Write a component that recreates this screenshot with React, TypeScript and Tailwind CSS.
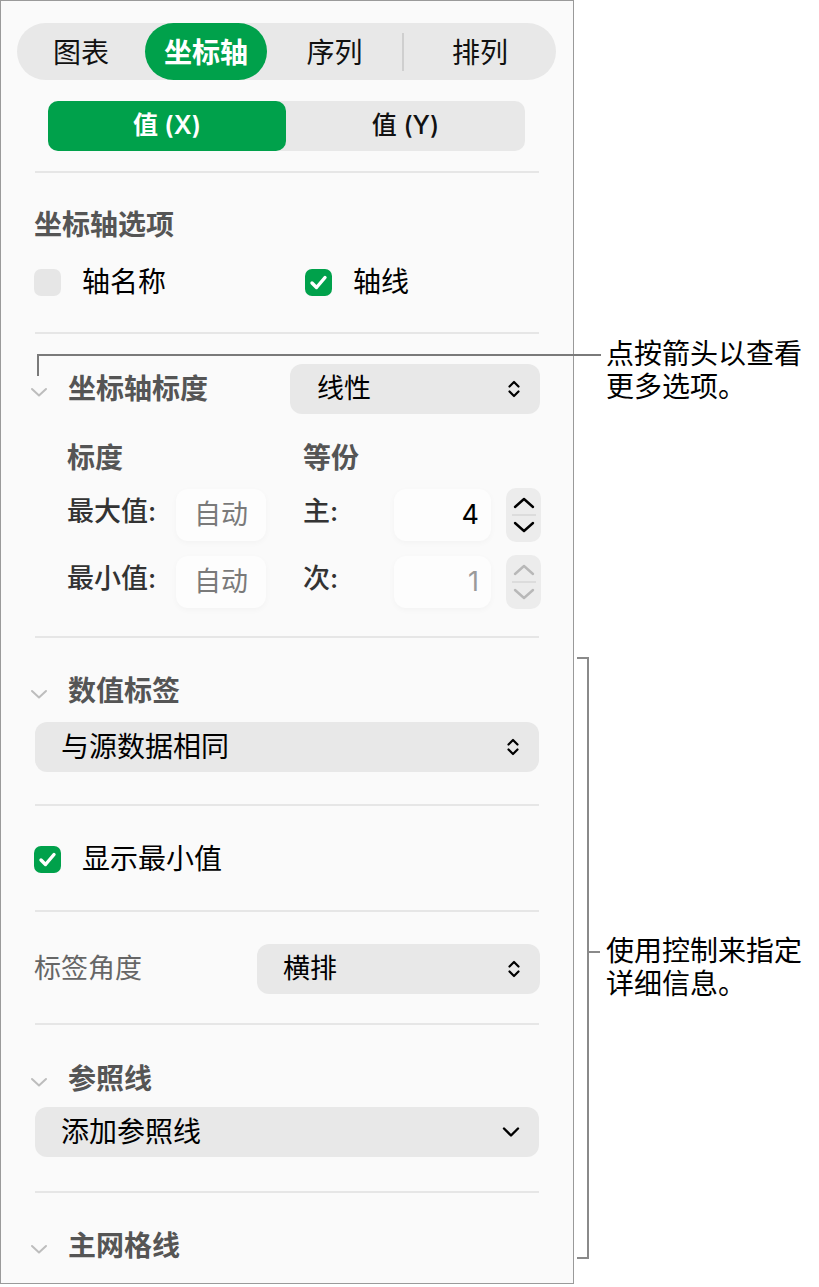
import React from 'react'

const font = "font-['Inter','Noto_Sans_CJK_SC',sans-serif]"

function UpDown({ className = '' }: { className?: string }) {
  return (
    <svg width="16" height="24" viewBox="0 0 16 24" className={className} fill="none">
      <path d="M3.5 9.5 L8 5 L12.5 9.5" stroke="currentColor" strokeWidth="2.2" strokeLinecap="round" strokeLinejoin="round" />
      <path d="M3.5 14.5 L8 19 L12.5 14.5" stroke="currentColor" strokeWidth="2.2" strokeLinecap="round" strokeLinejoin="round" />
    </svg>
  )
}

function Disclosure() {
  return (
    <svg width="18" height="12" viewBox="0 0 18 12" fill="none" className="text-[#bdbdbd]">
      <path d="M2 3 L9 9.5 L16 3" stroke="currentColor" strokeWidth="2" strokeLinecap="round" strokeLinejoin="round" />
    </svg>
  )
}

function Check({ on, label }: { on: boolean; label: string }) {
  return (
    <div className="flex items-center gap-[21px] h-[32px]">
      {on ? (
        <div className="w-[27px] h-[27px] rounded-[7px] bg-[#00a14b] flex items-center justify-center">
          <svg width="27" height="27" viewBox="0 0 27 27" fill="none">
            <path d="M7 14 L11.5 18.5 L20 8.5" stroke="white" strokeWidth="3.4" strokeLinecap="round" strokeLinejoin="round" />
          </svg>
        </div>
      ) : (
        <div className="w-[27px] h-[27px] rounded-[7px] bg-[#e6e6e6]" />
      )}
      <span className="text-[28px] leading-[32px] text-black">{label}</span>
    </div>
  )
}

function Divider({ mt }: { mt: string }) {
  return <div className={`${mt} mx-[34px] h-[2px] bg-[#e6e6e6]`} />
}

function SectionHead({ label, mt }: { label: string; mt: string }) {
  return (
    <div className={`${mt} flex items-center h-[32px] pl-[29px]`}>
      <div className="w-[38px] pt-[6px]">
        <Disclosure />
      </div>
      <span className="text-[28px] leading-[32px] font-semibold text-[#555]">{label}</span>
    </div>
  )
}

function Stepper({ disabled }: { disabled?: boolean }) {
  const c = disabled ? 'text-[#b8b8b8]' : 'text-black'
  return (
    <div className={`w-[35px] h-[54px] rounded-[10px] bg-[#ececec] flex flex-col items-center justify-center ${c}`}>
      <svg width="24" height="14" viewBox="0 0 24 14" fill="none">
        <path d="M3 11 L12 3 L21 11" stroke="currentColor" strokeWidth="2.4" strokeLinecap="round" strokeLinejoin="round" />
      </svg>
      <div className="w-[24px] h-[2px] bg-[#dcdcdc] my-[4px]" />
      <svg width="24" height="14" viewBox="0 0 24 14" fill="none">
        <path d="M3 3 L12 11 L21 3" stroke="currentColor" strokeWidth="2.4" strokeLinecap="round" strokeLinejoin="round" />
      </svg>
    </div>
  )
}

function Field({ children, right, color }: { children: React.ReactNode; right?: boolean; color: string }) {
  return (
    <div
      className={`h-[52px] rounded-[12px] bg-[#fdfdfd] shadow-[0_2px_6px_rgba(0,0,0,0.03)] flex items-center text-[27px] ${color} ${
        right ? 'w-[97px] justify-end pr-[12px]' : 'w-[90px] justify-center'
      }`}
    >
      {children}
    </div>
  )
}

export default function App() {
  return (
    <div className={`relative w-[819px] h-[1287px] bg-white ${font}`}>
      <div className="w-[574px] h-[1284px] border-[1.5px] border-[#9a9a9a] bg-[#fafafa] overflow-hidden">
        {/* top tabs */}
        <div className="mt-[22px] ml-[16px] w-[539px] h-[57px] rounded-full bg-[#e8e8e8] flex items-center text-[28px] text-[#111]">
          <div className="w-[128px] text-center pt-[2px]">图表</div>
          <div className="w-[122px] h-[57px] rounded-full bg-[#00a14b] text-white font-semibold flex items-center justify-center pt-[2px]">坐标轴</div>
          <div className="w-[135px] text-center pt-[2px]">序列</div>
          <div className="w-[2px] h-[38px] bg-[#cfcfcf]" />
          <div className="flex-1 text-center pt-[2px]">排列</div>
        </div>

        {/* x / y */}
        <div className="mt-[21px] ml-[47px] w-[477px] h-[50px] rounded-[10px] bg-[#e8e8e8] flex text-[25px]">
          <div className="w-[238px] rounded-[10px] bg-[#00a14b] text-white font-semibold flex items-center justify-center">值 (X)</div>
          <div className="flex-1 flex items-center justify-center text-[#111] font-medium">值 (Y)</div>
        </div>

        <Divider mt="mt-[20px]" />

        <div className="mt-[36px] pl-[33px] text-[28px] leading-[32px] font-semibold text-[#555]">坐标轴选项</div>
        <div className="mt-[25px] pl-[33px] flex">
          <div className="w-[271px]">
            <Check on={false} label="轴名称" />
          </div>
          <Check on label="轴线" />
        </div>

        <Divider mt="mt-[34px]" />

        {/* axis scale */}
        <div className="mt-[30px] flex items-center pl-[29px] pr-[33px]">
          <div className="w-[38px] pt-[6px]">
            <Disclosure />
          </div>
          <span className="flex-1 text-[28px] leading-[32px] font-semibold text-[#555]">坐标轴标度</span>
          <div className="w-[250px] h-[50px] rounded-[12px] bg-[#e8e8e8] flex items-center justify-between pl-[27px] pr-[18px]">
            <span className="text-[27px] text-black">线性</span>
            <UpDown />
          </div>
        </div>

        <div className="mt-[28px] pl-[66px] flex text-[28px] leading-[32px] font-semibold text-[#555]">
          <div className="w-[236px]">标度</div>
          <div>等份</div>
        </div>

        <div className="mt-[14px] pl-[66px] flex items-center h-[54px]">
          <span className="w-[109px] text-[27px] font-medium text-[#333] -mt-[6px]">最大值:</span>
          <Field color="text-[#7a7a7a]">自动</Field>
          <span className="ml-[37px] w-[91px] text-[27px] font-medium text-[#333] -mt-[6px]">主:</span>
          <Field right color="text-black">4</Field>
          <div className="ml-[15px]">
            <Stepper />
          </div>
        </div>

        <div className="mt-[13px] pl-[66px] flex items-center h-[54px]">
          <span className="w-[109px] text-[27px] font-medium text-[#333] -mt-[6px]">最小值:</span>
          <Field color="text-[#7a7a7a]">自动</Field>
          <span className="ml-[37px] w-[91px] text-[27px] font-medium text-[#333] -mt-[6px]">次:</span>
          <Field right color="text-[#9a9a9a]">1</Field>
          <div className="ml-[15px]">
            <Stepper disabled />
          </div>
        </div>

        <Divider mt="mt-[27px]" />

        <SectionHead label="数值标签" mt="mt-[37px]" />
        <div className="mt-[15px] mx-[34px] h-[50px] rounded-[12px] bg-[#e8e8e8] flex items-center justify-between pl-[26px] pr-[18px]">
          <span className="text-[28px] text-black">与源数据相同</span>
          <UpDown />
        </div>

        <Divider mt="mt-[32px]" />

        <div className="mt-[37px] pl-[33px]">
          <Check on label="显示最小值" />
        </div>

        <Divider mt="mt-[35px]" />

        <div className="mt-[32px] flex items-center pl-[33px] pr-[33px]">
          <span className="flex-1 text-[27px] text-[#666]">标签角度</span>
          <div className="w-[283px] h-[50px] rounded-[12px] bg-[#e8e8e8] flex items-center justify-between pl-[26px] pr-[18px]">
            <span className="text-[27px] text-black">横排</span>
            <UpDown />
          </div>
        </div>

        <Divider mt="mt-[29px]" />

        <SectionHead label="参照线" mt="mt-[38px]" />
        <div className="mt-[12px] mx-[34px] h-[50px] rounded-[12px] bg-[#e8e8e8] flex items-center justify-between pl-[26px] pr-[18px]">
          <span className="text-[28px] text-black">添加参照线</span>
          <svg width="20" height="12" viewBox="0 0 20 12" fill="none">
            <path d="M3 2.5 L10 9.5 L17 2.5" stroke="black" strokeWidth="2.4" strokeLinecap="round" strokeLinejoin="round" />
          </svg>
        </div>

        <Divider mt="mt-[34px]" />

        <SectionHead label="主网格线" mt="mt-[37px]" />
      </div>

      {/* callout: arrow */}
      <div className="absolute left-[37px] top-[354px] w-[564px] h-[2px] bg-[#7a7a7a]" />
      <div className="absolute left-[37px] top-[354px] w-[2px] h-[22px] bg-[#7a7a7a]" />
      <div className="absolute left-[606px] top-[338px] text-[28px] leading-[33px] text-black">
        <div>点按箭头以查看</div>
        <div>更多选项。</div>
      </div>

      {/* callout: bracket */}
      <div className="absolute left-[577px] top-[657px] w-[12px] h-[2px] bg-[#8a8a8a]" />
      <div className="absolute left-[587px] top-[657px] w-[2px] h-[602px] bg-[#8a8a8a]" />
      <div className="absolute left-[577px] top-[1257px] w-[12px] h-[2px] bg-[#8a8a8a]" />
      <div className="absolute left-[589px] top-[951px] w-[11px] h-[2px] bg-[#8a8a8a]" />
      <div className="absolute left-[606px] top-[935px] text-[28px] leading-[33px] text-black">
        <div>使用控制来指定</div>
        <div>详细信息。</div>
      </div>
    </div>
  )
}
